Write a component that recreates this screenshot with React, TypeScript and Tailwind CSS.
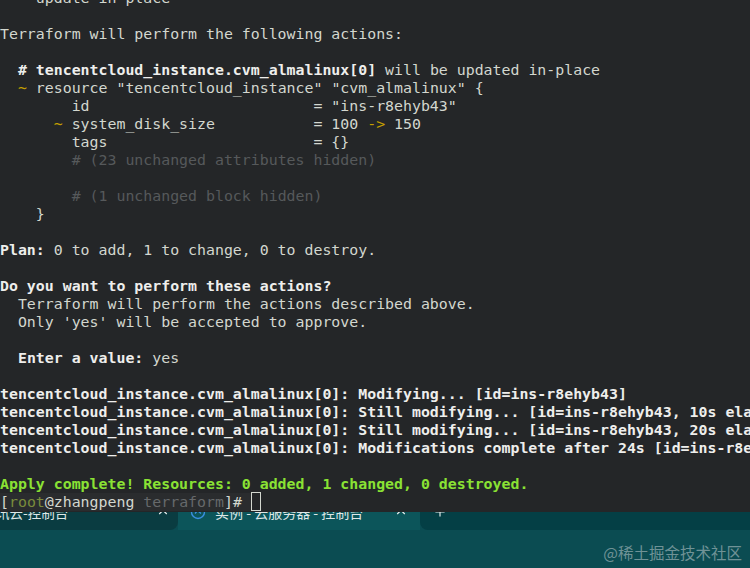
import { ChevronUp, Plus } from "lucide-react";

const Y = ({ children }: { children: React.ReactNode }) => (
  <span className="text-[#c4a000]">{children}</span>
);
const B = ({ children }: { children: React.ReactNode }) => (
  <span className="font-bold text-[#eeeeec]">{children}</span>
);
const Dim = ({ children }: { children: React.ReactNode }) => (
  <span className="text-[#56595b]">{children}</span>
);

function Terminal() {
  return (
    <div className="relative z-10 h-[512px] overflow-hidden bg-[#242628] text-[#d3d7cf]">
      <div
        className="-mt-[11px] whitespace-pre text-[14.88px] leading-[18px]"
        style={{ fontFamily: '"DejaVu Sans Mono", "Liberation Mono", monospace' }}
      >
        <div>
          {"  "}
          <Y>~</Y>
          {" update in-place"}
        </div>
        <div> </div>
        <div>Terraform will perform the following actions:</div>
        <div> </div>
        <div>
          {"  "}
          <B># tencentcloud_instance.cvm_almalinux[0]</B>
          {" will be updated in-place"}
        </div>
        <div>
          {"  "}
          <Y>~</Y>
          {' resource "tencentcloud_instance" "cvm_almalinux" {'}
        </div>
        <div>{'        id                         = "ins-r8ehyb43"'}</div>
        <div>
          {"      "}
          <Y>~</Y>
          {" system_disk_size           = 100 "}
          <Y>-&gt;</Y>
          {" 150"}
        </div>
        <div>{"        tags                       = {}"}</div>
        <div>
          {"        "}
          <Dim># (23 unchanged attributes hidden)</Dim>
        </div>
        <div> </div>
        <div>
          {"        "}
          <Dim># (1 unchanged block hidden)</Dim>
        </div>
        <div>{"    }"}</div>
        <div> </div>
        <div>
          <B>Plan:</B> 0 to add, 1 to change, 0 to destroy.
        </div>
        <div> </div>
        <div>
          <B>Do you want to perform these actions?</B>
        </div>
        <div>{"  Terraform will perform the actions described above."}</div>
        <div>{"  Only 'yes' will be accepted to approve."}</div>
        <div> </div>
        <div>
          {"  "}
          <B>Enter a value:</B> yes
        </div>
        <div> </div>
        <div>
          <B>tencentcloud_instance.cvm_almalinux[0]: Modifying... [id=ins-r8ehyb43]</B>
        </div>
        <div>
          <B>
            tencentcloud_instance.cvm_almalinux[0]: Still modifying... [id=ins-r8ehyb43, 10s elapsed]
          </B>
        </div>
        <div>
          <B>
            tencentcloud_instance.cvm_almalinux[0]: Still modifying... [id=ins-r8ehyb43, 20s elapsed]
          </B>
        </div>
        <div>
          <B>
            tencentcloud_instance.cvm_almalinux[0]: Modifications complete after 24s [id=ins-r8ehyb43]
          </B>
        </div>
        <div> </div>
        <div className="font-bold text-[#8ae234]">
          Apply complete! Resources: 0 added, 1 changed, 0 destroyed.
        </div>
        <div className="flex">
          <span className="bg-[#2a2c2e]">
            [<span className="text-[#7a8c3c]">root</span>@zhangpeng{" "}
            <span className="text-[#66696b]">terraform</span>]#{" "}
          </span>
          <span className="inline-block h-[19px] w-[10px] -mt-[1px] border border-[#d3d7cf]" />
        </div>
      </div>
    </div>
  );
}

function TabIcon() {
  return (
    <svg width="16" height="16" viewBox="0 0 16 16" className="shrink-0">
      <circle cx="8" cy="8" r="6.5" fill="none" stroke="#3b8fe0" strokeWidth="1.4" />
      <path d="M5 9.5 L7.5 6.5 L11 9.5" fill="none" stroke="#3b8fe0" strokeWidth="1.3" />
    </svg>
  );
}

export default function App() {
  return (
    <div className="flex h-[568px] w-[750px] flex-col overflow-hidden bg-[#0b4c52]">
      <Terminal />
      <div
        className="flex h-[18px] text-[13.5px] text-[#dfe7e7]"
        style={{ fontFamily: '"Noto Sans CJK SC", "Noto Sans", sans-serif' }}
      >
        <div className="w-[178px] rounded-br-[8px] bg-[#0a3c41]">
          <div className="-mt-[14px] flex h-[28px] items-center pr-[8px]">
            <span className="-ml-[4px] whitespace-nowrap">讯云-控制台</span>
            <ChevronUp className="ml-auto h-[14px] w-[14px] text-[#e6eded]" strokeWidth={2} />
          </div>
        </div>
        <div className="w-[242px] bg-[#0c555a]">
          <div className="-mt-[14px] flex h-[28px] items-center pl-[12px] pr-[12px]">
            <TabIcon />
            <span className="ml-[9px] whitespace-nowrap text-[14px]">实例 - 云服务器 - 控制台</span>
            <ChevronUp className="ml-auto h-[14px] w-[14px] text-[#e6eded]" strokeWidth={2} />
          </div>
        </div>
        <div className="flex-1 rounded-bl-[8px] bg-[#043f45]">
          <div className="-mt-[14px] flex h-[28px] items-center pl-[13px]">
            <Plus className="h-[14px] w-[14px] text-[#e6eded]" strokeWidth={2} />
          </div>
        </div>
      </div>
      <div className="flex flex-1 items-end justify-end pb-[8px] pr-[8px]">
        <span
          className="text-[15.5px] leading-[16px] text-[#6f9296]"
          style={{ fontFamily: '"Noto Sans CJK SC", sans-serif' }}
        >
          @稀土掘金技术社区
        </span>
      </div>
    </div>
  );
}
